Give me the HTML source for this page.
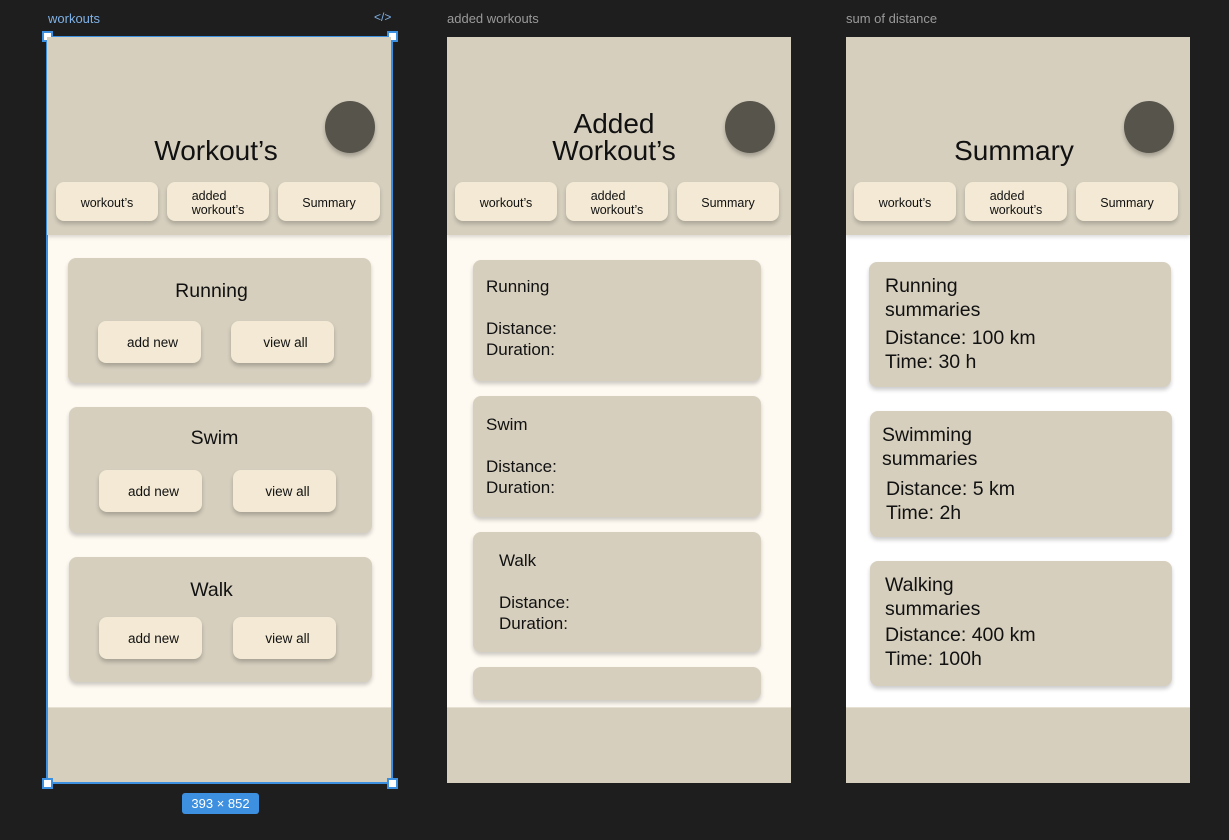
<!DOCTYPE html>
<html><head><meta charset="utf-8"><style>
*{margin:0;padding:0;box-sizing:border-box}
body{width:1229px;height:840px;background:#1e1e1e;position:relative;overflow:hidden;font-family:"Liberation Sans",sans-serif;color:#111}
.a{position:absolute}
.lbl{font-size:13px;color:#9a9a9a;top:11px}
.frame{position:absolute;top:37px;width:344px;height:746px;background:#d6cfbe;overflow:hidden}
.hdr{position:absolute;left:0;top:0;width:100%;height:198px;background:#d6cfbe;box-shadow:0 2px 4px rgba(0,0,0,.15);z-index:2}
.content{position:absolute;left:0;top:198px;width:100%;height:472px;background:#fefaf2}
.foot{position:absolute;left:0;top:670px;width:100%;height:76px;background:#d6cfbe;border-top:1px solid #e6e0d2}
.circle{position:absolute;left:278px;top:64px;width:50px;height:52px;border-radius:50%;background:#57544b;box-shadow:0 3px 4px rgba(0,0,0,.25)}
.title{position:absolute;left:0;width:100%;text-align:center;font-size:28px;line-height:27px;color:#111}
.tab{position:absolute;top:145px;width:102px;height:39px;border-radius:8px;background:#f3e9d4;box-shadow:0 3px 4px rgba(0,0,0,.2);font-size:12.5px;line-height:14px;display:flex;align-items:center;justify-content:center;text-align:left;padding-top:2px}
.card{position:absolute;background:#d6cfbe;border-radius:8px;box-shadow:0 3px 4px rgba(0,0,0,.2)}
.ct{position:absolute;left:0;width:100%;text-align:center;font-size:19.5px}
.btn{position:absolute;width:103px;height:42px;border-radius:8px;background:#f3e9d4;box-shadow:0 3px 4px rgba(0,0,0,.22);font-size:13.5px;display:flex;align-items:center;justify-content:center;padding-left:6px}
.t2{position:absolute;font-size:17px;line-height:21px}
.t3{position:absolute;font-size:19.5px;line-height:23.5px}
</style></head><body>
<div class="a lbl" style="left:48px;color:#7fb1e6">workouts</div>
<div class="a" style="left:374px;top:10px;font-size:12px;color:#7fb1e6">&lt;/&gt;</div>
<div class="a lbl" style="left:447px">added workouts</div>
<div class="a lbl" style="left:846px">sum of distance</div>

<!-- frame 1 -->
<div class="frame" style="left:47px">
 <div class="hdr">
  <div class="title" style="top:100px;left:-3px">Workout’s</div>
  <div class="circle"></div>
  <div class="tab" style="left:9px">workout’s</div>
  <div class="tab" style="left:120px">added<br>workout’s</div>
  <div class="tab" style="left:231px">Summary</div>
 </div>
 <div class="content">
  <div class="card" style="left:21px;top:23px;width:303px;height:125px">
   <div class="ct" style="top:22px;left:-8px">Running</div>
   <div class="btn" style="left:30px;top:63px">add new</div>
   <div class="btn" style="left:163px;top:63px">view all</div>
  </div>
  <div class="card" style="left:22px;top:172px;width:303px;height:126px">
   <div class="ct" style="top:20px;left:-6px">Swim</div>
   <div class="btn" style="left:30px;top:63px">add new</div>
   <div class="btn" style="left:164px;top:63px">view all</div>
  </div>
  <div class="card" style="left:22px;top:322px;width:303px;height:125px">
   <div class="ct" style="top:22px;left:-9px">Walk</div>
   <div class="btn" style="left:30px;top:60px">add new</div>
   <div class="btn" style="left:164px;top:60px">view all</div>
  </div>
 </div>
 <div class="foot"></div>
</div>
<div class="a" style="left:46px;top:36px;width:347px;height:748px;border:2px solid #3d8fe0"></div>
<div class="a" style="left:42px;top:31px;width:11px;height:11px;background:#fff;border:2px solid #3d8fe0"></div>
<div class="a" style="left:387px;top:31px;width:11px;height:11px;background:#fff;border:2px solid #3d8fe0"></div>
<div class="a" style="left:42px;top:778px;width:11px;height:11px;background:#fff;border:2px solid #3d8fe0"></div>
<div class="a" style="left:387px;top:778px;width:11px;height:11px;background:#fff;border:2px solid #3d8fe0"></div>
<div class="a" style="left:182px;top:793px;width:77px;height:21px;background:#3d8fe0;border-radius:3px;color:#fff;font-size:13px;line-height:21px;text-align:center">393 × 852</div>

<!-- frame 2 -->
<div class="frame" style="left:447px">
 <div class="hdr">
  <div class="title" style="top:73px;left:-5px">Added<br>Workout’s</div>
  <div class="circle"></div>
  <div class="tab" style="left:8px">workout’s</div>
  <div class="tab" style="left:119px">added<br>workout’s</div>
  <div class="tab" style="left:230px">Summary</div>
 </div>
 <div class="content">
  <div class="card" style="left:26px;top:25px;width:288px;height:121px">
   <div class="t2" style="left:13px;top:16px">Running<br><br>Distance:<br>Duration:</div>
  </div>
  <div class="card" style="left:26px;top:161px;width:288px;height:121px">
   <div class="t2" style="left:13px;top:18px">Swim<br><br>Distance:<br>Duration:</div>
  </div>
  <div class="card" style="left:26px;top:297px;width:288px;height:120px">
   <div class="t2" style="left:26px;top:18px">Walk<br><br>Distance:<br>Duration:</div>
  </div>
  <div class="card" style="left:26px;top:432px;width:288px;height:33px"></div>
 </div>
 <div class="foot"></div>
</div>

<!-- frame 3 -->
<div class="frame" style="left:846px">
 <div class="hdr">
  <div class="title" style="top:100px;left:-4px">Summary</div>
  <div class="circle"></div>
  <div class="tab" style="left:8px">workout’s</div>
  <div class="tab" style="left:119px">added<br>workout’s</div>
  <div class="tab" style="left:230px">Summary</div>
 </div>
 <div class="content" style="background:#fff">
  <div class="card" style="left:23px;top:27px;width:302px;height:125px">
   <div class="t3" style="left:16px;top:13px">Running<br>summaries</div>
   <div class="t3" style="left:16px;top:65px">Distance: 100 km<br>Time: 30 h</div>
  </div>
  <div class="card" style="left:24px;top:176px;width:302px;height:126px">
   <div class="t3" style="left:12px;top:13px">Swimming<br>summaries</div>
   <div class="t3" style="left:16px;top:67px">Distance: 5 km<br>Time: 2h</div>
  </div>
  <div class="card" style="left:24px;top:326px;width:302px;height:125px">
   <div class="t3" style="left:15px;top:13px">Walking<br>summaries</div>
   <div class="t3" style="left:15px;top:63px">Distance: 400 km<br>Time: 100h</div>
  </div>
 </div>
 <div class="foot"></div>
</div>
</body></html>
